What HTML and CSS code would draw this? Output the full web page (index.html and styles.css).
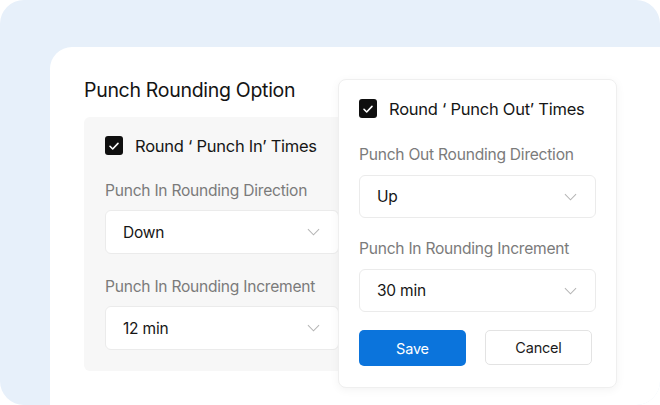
FILE: index.html
```html
<!DOCTYPE html>
<html>
<head>
<meta charset="utf-8">
<link rel="stylesheet" href="styles.css">
</head>
<body>
<div class="frame">
  <div class="card">
    <h1 class="title">Punch Rounding Option</h1>
    <div class="panel">
      <div class="check-row">
        <span class="checkbox"><svg viewBox="0 0 18 18" width="18" height="18"><path d="M5 9.3l2.7 2.7L13 6.4" fill="none" stroke="#fff" stroke-width="1.6" stroke-linecap="round" stroke-linejoin="round"/></svg></span>
        <span class="check-label">Round ‘ Punch In’ Times</span>
      </div>
      <div class="field-label first">Punch In Rounding Direction</div>
      <div class="select"><span>Down</span><svg class="chev" viewBox="0 0 14 8" width="13" height="8"><path d="M1 1l6 6 6-6" fill="none" stroke="#b5b5b5" stroke-width="1.1"/></svg></div>
      <div class="field-label">Punch In Rounding Increment</div>
      <div class="select"><span>12 min</span><svg class="chev" viewBox="0 0 14 8" width="13" height="8"><path d="M1 1l6 6 6-6" fill="none" stroke="#b5b5b5" stroke-width="1.1"/></svg></div>
    </div>
    <div class="popup">
      <div class="check-row">
        <span class="checkbox"><svg viewBox="0 0 18 18" width="18" height="18"><path d="M5 9.3l2.7 2.7L13 6.4" fill="none" stroke="#fff" stroke-width="1.6" stroke-linecap="round" stroke-linejoin="round"/></svg></span>
        <span class="check-label">Round ‘ Punch Out’ Times</span>
      </div>
      <div class="field-label first">Punch Out Rounding Direction</div>
      <div class="select"><span>Up</span><svg class="chev" viewBox="0 0 14 8" width="13" height="8"><path d="M1 1l6 6 6-6" fill="none" stroke="#b5b5b5" stroke-width="1.1"/></svg></div>
      <div class="field-label">Punch In Rounding Increment</div>
      <div class="select"><span>30 min</span><svg class="chev" viewBox="0 0 14 8" width="13" height="8"><path d="M1 1l6 6 6-6" fill="none" stroke="#b5b5b5" stroke-width="1.1"/></svg></div>
      <div class="buttons">
        <button class="btn save">Save</button>
        <button class="btn cancel">Cancel</button>
      </div>
    </div>
  </div>
</div>
</body>
</html>
```
FILE: styles.css
```css
* { box-sizing: border-box; }
html, body { margin: 0; padding: 0; background: #fff; }
body {
  width: 660px;
  height: 405px;
  overflow: hidden;
  font-family: Inter, "Liberation Sans", sans-serif;
  color: #1b1b1b;
}
.frame {
  width: 660px;
  height: 405px;
  background: #e7f0fa;
  border-radius: 24px;
  padding: 47px 0 0 50px;
  overflow: hidden;
}
.card {
  position: relative;
  width: 610px;
  height: 358px;
  background: #fff;
  border-top-left-radius: 22px;
  padding: 31px 0 0 34px;
}
.title {
  margin: 0;
  font-size: 19.5px;
  font-weight: 400;
  line-height: 24px;
  letter-spacing: -0.3px;
  color: #141414;
}
.panel {
  margin-top: 15px;
  width: 290px;
  background: #f7f7f7;
  border-radius: 6px;
  padding: 19px 21px 21px 21px;
}
.check-row {
  display: flex;
  align-items: center;
  height: 19px;
  gap: 12px;
}
.checkbox {
  width: 18px;
  height: 19px;
  background: #0f0f0f;
  border-radius: 3px;
  display: flex;
  align-items: center;
  justify-content: center;
}
.check-label {
  font-size: 16.5px;
  letter-spacing: -0.25px;
  color: #161616;
}
.field-label {
  font-size: 15.6px;
  letter-spacing: -0.25px;
  color: #7b7b7b;
  line-height: 20px;
  margin: 23px 0 9px;
}
.field-label.first { margin-top: 26px; }
.select {
  height: 44px;
  background: #fff;
  border: 1px solid #ebebeb;
  border-radius: 6px;
  display: flex;
  align-items: center;
  justify-content: space-between;
  padding: 0 18px 0 17px;
  font-size: 15.5px;
  letter-spacing: -0.2px;
  color: #161616;
}
.panel .select { margin-right: 14px; }
.popup {
  position: absolute;
  left: 288px;
  top: 32px;
  width: 279px;
  height: 309px;
  background: #fff;
  border: 1px solid #efefef;
  border-radius: 8px;
  box-shadow: 0 2px 10px rgba(0, 0, 0, 0.05);
  padding: 19px 20px 20px 20px;
}
.popup .field-label { margin: 21px 0 10px; }
.popup .field-label.first { margin-top: 27px; }
.popup .select { height: 43px; }
.buttons {
  display: flex;
  justify-content: space-between;
  margin-top: 18px;
  padding-right: 4px;
}
.btn {
  width: 107px;
  height: 36px;
  border-radius: 5px;
  font-family: Inter, "Liberation Sans", sans-serif;
  font-size: 14.5px;
  letter-spacing: -0.2px;
  cursor: pointer;
}
.save {
  background: #0b74dc;
  color: #fff;
  border: none;
}
.cancel {
  background: #fff;
  color: #1b1b1b;
  border: 1px solid #e3e3e3;
  height: 35px;
}
```
